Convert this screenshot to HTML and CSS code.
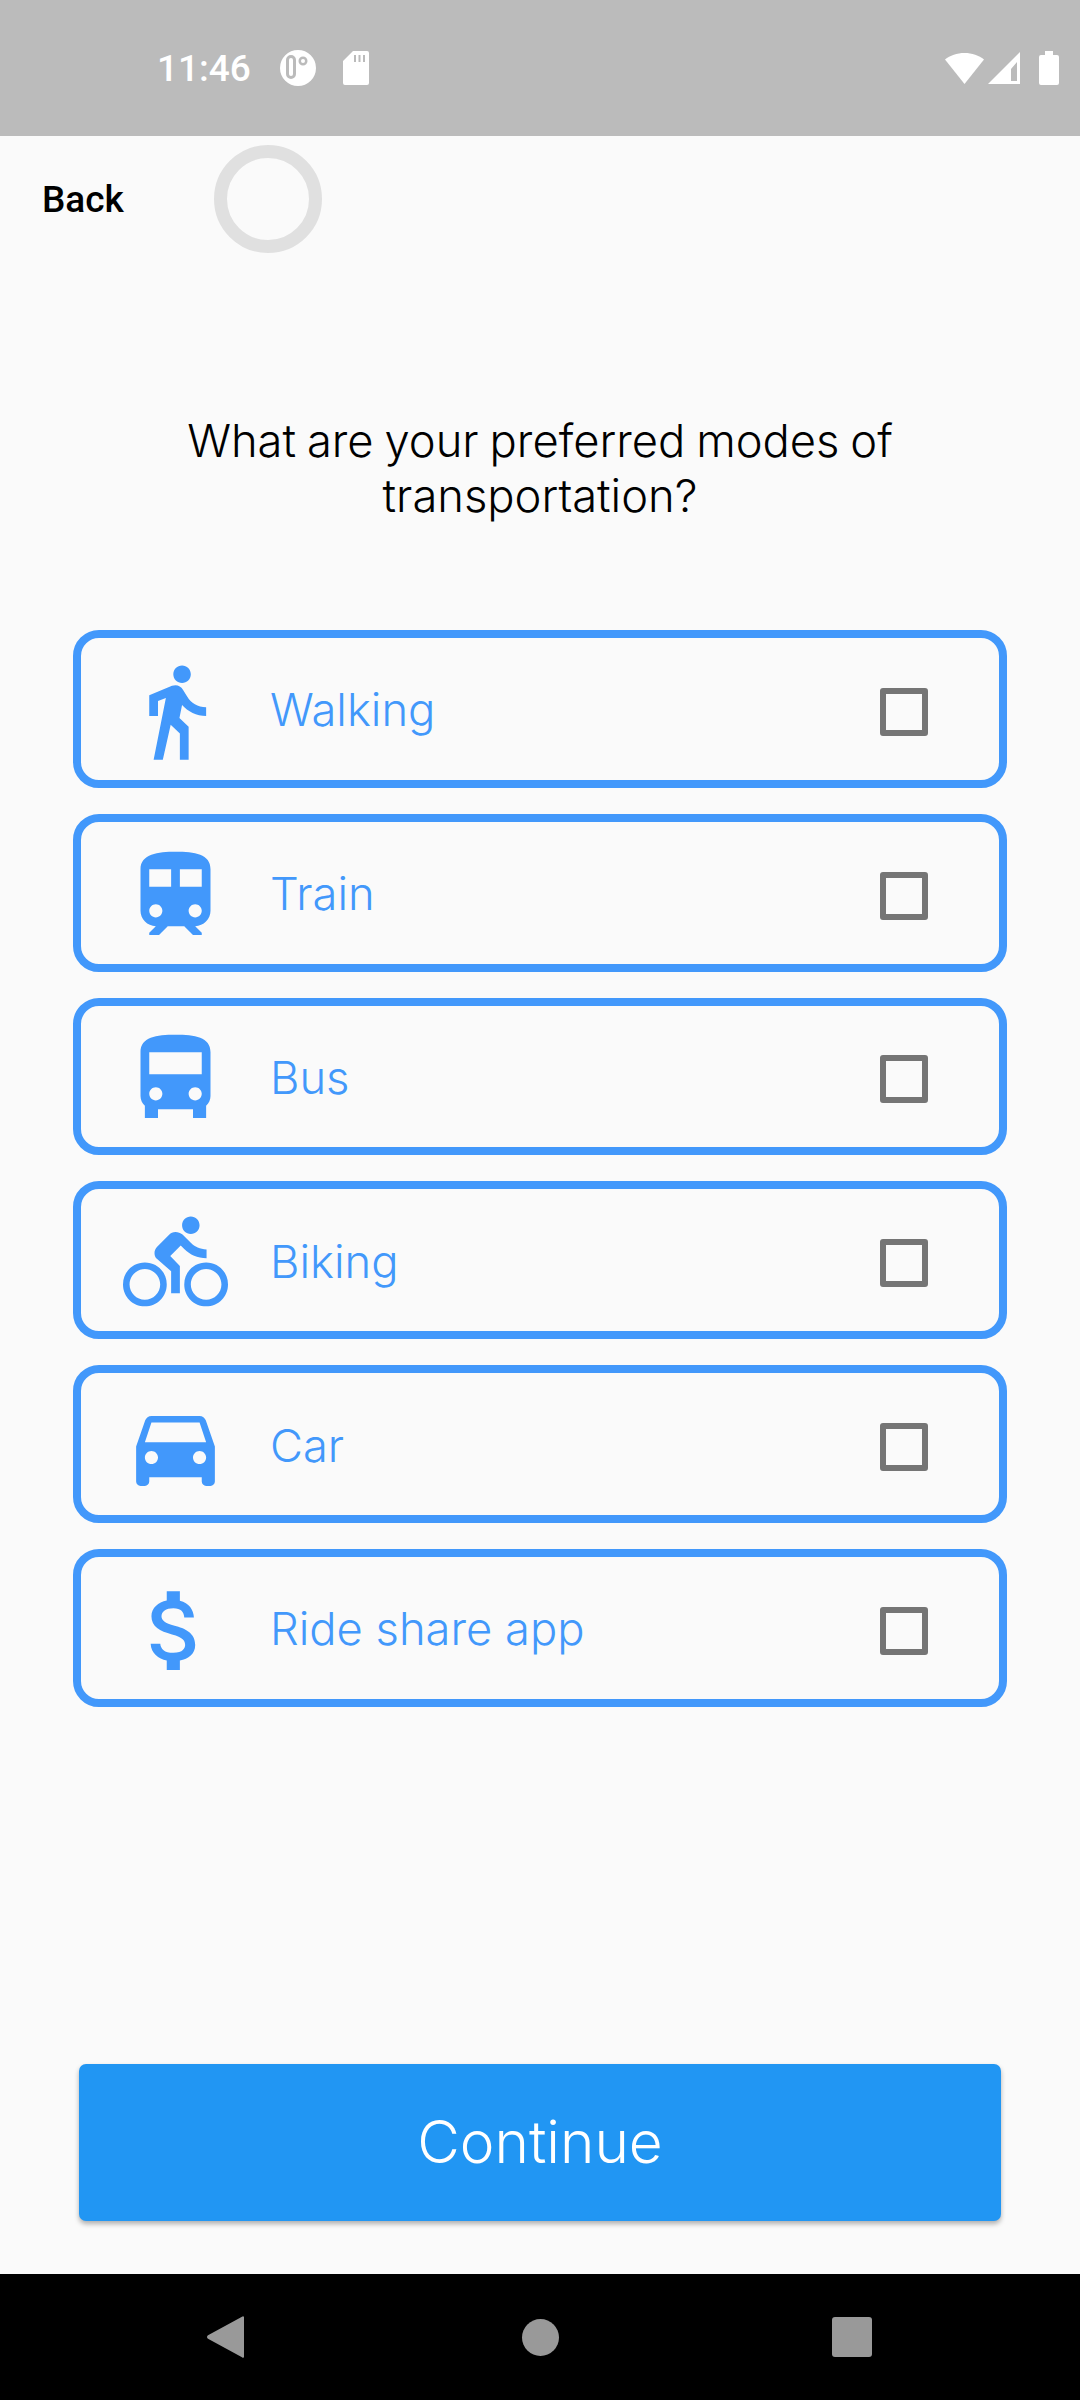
FILE: index.html
```html
<!DOCTYPE html>
<html lang="en">
<head>
	<meta charset="UTF-8">
	<title>Transportation</title>
	<link rel="stylesheet" href="styles.css">
</head>
<body>
	<div class="page">
		<header class="status">
			<span class="time">11:46</span>
			<svg class="ico-app" viewBox="0 0 36 36"><path fill-rule="evenodd" d="M18 0a18 18 0 1 0 0 36 18 18 0 0 0 0-36zM11 5a5 5 0 0 1 5 5v14a5 5 0 0 1-10 0V10a5 5 0 0 1 5-5zM23 6.500a4.500 4.500 0 1 1 0 9 4.500 4.500 0 0 1 0-9z"/><rect x="9" y="8" width="4" height="18" rx="2"/><circle cx="23" cy="11" r="2"/></svg>
			<svg class="ico-sd" viewBox="0 0 26 34"><path fill-rule="evenodd" d="M10 0h14a2 2 0 0 1 2 2v30a2 2 0 0 1-2 2H2a2 2 0 0 1-2-2V10zM11 4v7h2V4zM15.500 4v7h2V4zM20 4v7h2V4z"/></svg>
			<span class="status-right">
				<svg class="ico-wifi" viewBox="0 0 39 31"><path d="M0 6.500C5 2.500 12 0 19.500 0S34 2.500 39 6.500L19.500 31z"/></svg>
				<svg class="ico-signal" viewBox="0 0 32 32"><path fill-rule="evenodd" d="M32 0v32H0zM29 10l-6 7v12h6z"/></svg>
				<svg class="ico-batt" viewBox="0 0 20 34"><path d="M6 0h8v4h4a2 2 0 0 1 2 2v26a2 2 0 0 1-2 2H2a2 2 0 0 1-2-2V6a2 2 0 0 1 2-2h4z"/></svg>
			</span>
		</header>

		<main class="content">
			<div class="topbar">
				<a class="back" href="#">Back</a>
				<div class="spinner"></div>
			</div>

			<h1 class="question">What are your preferred modes of<br>transportation?</h1>

			<ul class="modes">
				<li class="mode">
					<svg class="mode-icon" viewBox="0 0 24 24"><path d="M13.500 5.500c1.100 0 2-.9 2-2s-.9-2-2-2-2 .9-2 2 .9 2 2 2zM9.800 8.900L7 23h2.100l1.800-8 2.100 2v6h2v-7.500l-2.100-2 .6-3C14.800 12 16.800 13 19 13v-2c-1.900 0-3.500-1-4.300-2.400l-1-1.600c-.4-.6-1-1-1.700-1-.3 0-.5.1-.8.1L6 8.300V13h2V9.600l1.800-.7"/></svg>
					<span class="mode-label">Walking</span>
					<span class="check"></span>
				</li>
				<li class="mode">
					<svg class="mode-icon" viewBox="0 0 24 24"><path d="M12 2c-4 0-8 .5-8 4v9.500C4 17.430 5.570 19 7.500 19L6 20.500v.5h2.230l2-2H14l2 2h2v-.5L16.500 19c1.930 0 3.500-1.570 3.500-3.500V6c0-3.500-3.580-4-8-4zM7.500 17c-.83 0-1.500-.67-1.500-1.500S6.670 14 7.500 14s1.500.67 1.500 1.500S8.330 17 7.500 17zm3.500-7H6V6h5v4zm2 0V6h5v4h-5zm3.500 7c-.83 0-1.500-.67-1.500-1.500s.67-1.500 1.500-1.500 1.500.67 1.500 1.500-.67 1.500-1.500 1.500z"/></svg>
					<span class="mode-label">Train</span>
					<span class="check"></span>
				</li>
				<li class="mode">
					<svg class="mode-icon" viewBox="0 0 24 24"><path d="M4 16c0 .88.39 1.670 1 2.220V21h3v-2h8v2h3v-2.780c.61-.55 1-1.340 1-2.220V6c0-3.500-3.580-4-8-4s-8 .5-8 4v10zm3.500 1c-.83 0-1.500-.67-1.500-1.500S6.670 14 7.500 14s1.500.67 1.500 1.500S8.330 17 7.500 17zm9 0c-.83 0-1.500-.67-1.500-1.500s.67-1.500 1.500-1.500 1.500.67 1.500 1.500-.67 1.500-1.500 1.500zm1.500-6H6V6h12v5z"/></svg>
					<span class="mode-label">Bus</span>
					<span class="check"></span>
				</li>
				<li class="mode">
					<svg class="mode-icon" viewBox="0 0 24 24"><path d="M15.500 5.500c1.100 0 2-.9 2-2s-.9-2-2-2-2 .9-2 2 .9 2 2 2zM5 12c-2.800 0-5 2.200-5 5s2.200 5 5 5 5-2.200 5-5-2.200-5-5-5zm0 8.500c-1.900 0-3.500-1.600-3.500-3.500s1.600-3.500 3.500-3.500 3.500 1.600 3.500 3.500-1.600 3.500-3.500 3.500zm5.800-10l2.400-2.400.8.8c1.300 1.300 3 2.100 5.100 2.100V9c-1.500 0-2.700-.6-3.600-1.500l-1.900-1.900c-.5-.4-1-.6-1.600-.6s-1.100.2-1.400.6L7.800 8.400c-.4.4-.6.9-.6 1.400 0 .6.2 1.100.6 1.400L11 14v5h2v-6.200l-2.200-2.300zM19 12c-2.800 0-5 2.200-5 5s2.200 5 5 5 5-2.200 5-5-2.200-5-5-5zm0 8.500c-1.900 0-3.500-1.600-3.500-3.500s1.600-3.500 3.500-3.500 3.500 1.600 3.500 3.500-1.600 3.500-3.500 3.500z"/></svg>
					<span class="mode-label">Biking</span>
					<span class="check"></span>
				</li>
				<li class="mode">
					<svg class="mode-icon" viewBox="0 0 24 24"><path d="M18.920 6.010C18.720 5.420 18.160 5 17.500 5h-11c-.66 0-1.210.42-1.420 1.010L3 12v8c0 .55.45 1 1 1h1c.55 0 1-.45 1-1v-1h12v1c0 .55.45 1 1 1h1c.55 0 1-.45 1-1v-8l-2.080-5.990zM6.500 16c-.83 0-1.500-.67-1.500-1.500S5.670 13 6.500 13s1.500.67 1.500 1.500S7.330 16 6.500 16zm11 0c-.83 0-1.500-.67-1.500-1.500s.67-1.500 1.500-1.500 1.500.67 1.500 1.500-.67 1.500-1.500 1.500zM5 11l1.500-4.500h11L19 11H5z"/></svg>
					<span class="mode-label">Car</span>
					<span class="check"></span>
				</li>
				<li class="mode">
					<svg class="mode-icon" viewBox="0 0 24 24"><path d="M11.800 10.900c-2.270-.59-3-1.200-3-2.150 0-1.090 1.010-1.850 2.700-1.850 1.780 0 2.440.85 2.500 2.100h2.210c-.07-1.720-1.120-3.300-3.210-3.810V3h-3v2.160c-1.940.42-3.500 1.680-3.500 3.610 0 2.310 1.910 3.460 4.700 4.130 2.500.6 3 1.480 3 2.410 0 .69-.49 1.790-2.700 1.790-2.060 0-2.870-.92-2.980-2.100h-2.200c.12 2.190 1.760 3.420 3.680 3.830V21h3v-2.150c1.950-.37 3.500-1.500 3.500-3.550 0-2.840-2.430-3.810-4.700-4.400z"/></svg>
					<span class="mode-label">Ride share app</span>
					<span class="check"></span>
				</li>
			</ul>

			<button class="continue">Continue</button>
		</main>

		<footer class="navbar">
			<svg class="nav-back" viewBox="0 0 37 42"><path d="M37 1.500v39c0 1.300-1 1.900-2 .8L1 22.800c-1.300-1-1.300-2.600 0-3.600L35 .7c1-1.100 2-.5 2 .8z"/></svg>
			<span class="nav-home"></span>
			<span class="nav-recent"></span>
		</footer>
	</div>
</body>
</html>
```

FILE: styles.css
```css
html, body, ul, li, h1 {
	margin: 0;
	padding: 0;
}
ul {
	list-style: none;
}
a {
	text-decoration: none;
}
body {
	background: #fafafa;
	font-family: "Inter", "Noto Sans", sans-serif;
}
.page {
	display: flex;
	flex-direction: column;
	height: 2400px;
	overflow: hidden;
}

/* status bar */
.status {
	display: flex;
	align-items: flex-start;
	flex: none;
	box-sizing: border-box;
	height: 136px;
	padding: 50px 21px 0 157px;
	background: #bbb;
	fill: #fff;
}
.time {
	width: 93px;
	height: 36px;
	color: #fff;
	font-family: "Roboto", sans-serif;
	font-size: 37px;
	font-weight: 500;
	line-height: 38px;
}
.ico-app {
	width: 36px;
	height: 36px;
	margin-left: 30px;
}
.ico-sd {
	width: 26px;
	height: 34px;
	margin: 1px 0 0 27px;
}
.status-right {
	display: flex;
	margin-left: auto;
	padding-top: 1px;
}
.ico-wifi {
	width: 39px;
	height: 31px;
	margin-top: 2px;
}
.ico-signal {
	width: 32px;
	height: 32px;
	margin: 1px 0 0 4px;
}
.ico-batt {
	width: 20px;
	height: 34px;
	margin-left: 19px;
}

/* main column */
.content {
	display: flex;
	flex: 1;
	flex-direction: column;
	align-items: center;
	padding-bottom: 53px;
}
.topbar {
	display: flex;
	align-items: center;
	align-self: stretch;
	padding: 9px 0 0 42px;
}
.back {
	width: 171.500px;
	padding-top: 1px;
	color: #000;
	font-family: "Roboto", sans-serif;
	font-size: 37px;
	font-weight: 500;
}
.spinner {
	box-sizing: border-box;
	width: 108px;
	height: 108px;
	border: 13px solid #e0e0e0;
	border-radius: 50%;
}
.question {
	margin-top: 160px;
	color: #000;
	font-size: 45.300px;
	font-weight: 300;
	line-height: 55px;
	text-align: center;
	word-spacing: -1.800px;
}

/* option cards */
.modes {
	display: flex;
	flex-direction: column;
	gap: 26px;
	width: 934px;
	margin-top: 107px;
}
.mode {
	display: flex;
	align-items: center;
	box-sizing: border-box;
	height: 157.800px;
	padding: 0 71px 0 42px;
	border: 8px solid #4298fb;
	border-radius: 26px;
	color: #4298fb;
	fill: #4298fb;
}
.mode-icon {
	flex: none;
	width: 105px;
	height: 105px;
	margin-top: 5px;
}
.mode-label {
	flex: 1;
	margin-left: 42px;
	padding-top: 2px;
	font-size: 45.300px;
	font-weight: 300;
}
.check {
	box-sizing: border-box;
	width: 48px;
	height: 48px;
	margin-top: 6px;
	border: 6px solid #757575;
	border-radius: 3px;
}

/* bottom button */
.continue {
	width: 922px;
	height: 157px;
	margin-top: auto;
	padding-bottom: 3px;
	border: 0;
	border-radius: 7px;
	background: #2196f3;
	box-shadow: 0 3px 5px rgba(0, 0, 0, 0.3);
	color: #fff;
	font-family: "Inter", sans-serif;
	font-size: 58.500px;
	font-weight: 300;
}

/* android nav */
.navbar {
	display: flex;
	align-items: center;
	justify-content: space-between;
	flex: none;
	box-sizing: border-box;
	height: 126px;
	padding: 0 208px 0 207px;
	background: #000;
}
.nav-back {
	width: 37px;
	height: 42px;
	fill: #999;
}
.nav-home {
	width: 37px;
	height: 37px;
	margin-left: 4px;
	border-radius: 50%;
	background: #999;
}
.nav-recent {
	width: 40px;
	height: 40px;
	border-radius: 3px;
	background: #999;
}
```
